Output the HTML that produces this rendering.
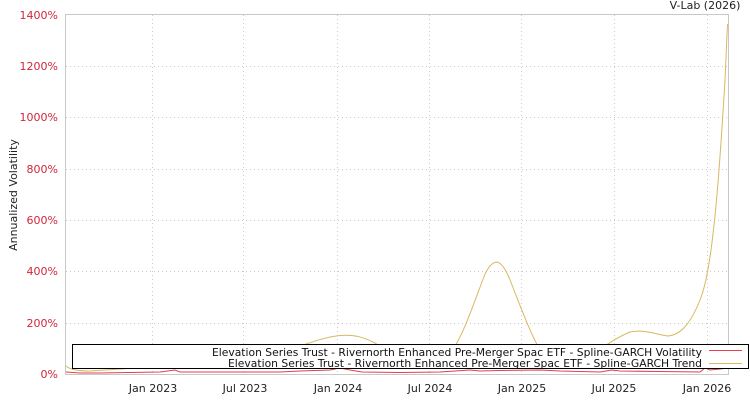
<!DOCTYPE html>
<html><head><meta charset="utf-8"><style>
body{margin:0;background:#fff;width:750px;height:400px;overflow:hidden;font-family:"DejaVu Sans","Liberation Sans",sans-serif}
</style></head><body>
<svg width="750" height="400" xmlns="http://www.w3.org/2000/svg" style="font-family:'DejaVu Sans','Liberation Sans',sans-serif">
<g stroke="#ccc" stroke-dasharray="1,3" stroke-width="1">
<line x1="66" x2="728" y1="66.5" y2="66.5"/><line x1="66" x2="728" y1="117.5" y2="117.5"/><line x1="66" x2="728" y1="169.5" y2="169.5"/><line x1="66" x2="728" y1="220.5" y2="220.5"/><line x1="66" x2="728" y1="271.5" y2="271.5"/><line x1="66" x2="728" y1="323.5" y2="323.5"/>
<line x1="152.5" x2="152.5" y1="15" y2="374"/><line x1="243.5" x2="243.5" y1="15" y2="374"/><line x1="337.5" x2="337.5" y1="15" y2="374"/><line x1="429.5" x2="429.5" y1="15" y2="374"/><line x1="521.5" x2="521.5" y1="15" y2="374"/><line x1="614.5" x2="614.5" y1="15" y2="374"/><line x1="707.5" x2="707.5" y1="15" y2="374"/>
</g>
<rect x="65.5" y="14.5" width="663" height="360" fill="none" stroke="#c8c8c8"/>
<g fill="#d0263a" font-size="11" text-anchor="end">
<text x="58" y="19">1400%</text><text x="58" y="70">1200%</text><text x="58" y="121">1000%</text><text x="58" y="173">800%</text><text x="58" y="224">600%</text><text x="58" y="275">400%</text><text x="58" y="327">200%</text><text x="58" y="378">0%</text>
</g>
<g fill="#222" font-size="11" text-anchor="middle">
<text x="153" y="392">Jan 2023</text><text x="245" y="392">Jul 2023</text><text x="338" y="392">Jan 2024</text><text x="430" y="392">Jul 2024</text><text x="522" y="392">Jan 2025</text><text x="614" y="392">Jul 2025</text><text x="707" y="392">Jan 2026</text>
<text x="705" y="9">V-Lab (2026)</text>
<text transform="translate(17,195) rotate(-90)" >Annualized Volatility</text>
</g>
<path d="M66,366 C70,370 80,371 90,371 C120,369 200,364 260,358 C290,352 315,338 340,335.5 C355,334 365,338 375,343 C390,352 400,362 410,366 C430,368 445,356 455,346 C465,330 475,300 485,274 C490,264 494,262 497,262 C502,263 506,270 510,280 C520,305 530,333 540,350 C550,364 560,368 570,366 C590,358 610,340 630,332 C645,329 658,335 668,336 C680,335 690,325 700,300 C706,285 710,262 714,225 C718,190 722,130 725,80 L727.5,24" fill="none" stroke="#d8b860" stroke-width="1"/>
<path d="M66,372 L80,373 L100,373 L130,372.5 L160,372 L175,370 L180,372 L230,372 L280,372 L300,371 L330,370 L340,368 L350,370 L362,372 L400,372.5 L440,372 L470,370 L480,371 L500,370.5 L540,370 L560,371 L600,372 L612,370 L620,371 L660,371.5 L700,372 L705,368 L710,370 L720,369 L728,368" fill="none" stroke="#e04050" stroke-width="1"/>
<rect x="72.5" y="344.5" width="676" height="24" fill="#fff" stroke="#000"/>
<g font-size="11" fill="#111">
<text x="212" y="356" textLength="490" lengthAdjust="spacingAndGlyphs">Elevation Series Trust - Rivernorth Enhanced Pre-Merger Spac ETF - Spline-GARCH Volatility</text>
<text x="228" y="367" textLength="474" lengthAdjust="spacingAndGlyphs">Elevation Series Trust - Rivernorth Enhanced Pre-Merger Spac ETF - Spline-GARCH Trend</text>
</g>
<line x1="709" x2="742" y1="350.5" y2="350.5" stroke="#e04050"/>
<line x1="709" x2="742" y1="363.5" y2="363.5" stroke="#d8b860"/>
</svg>
</body></html>
